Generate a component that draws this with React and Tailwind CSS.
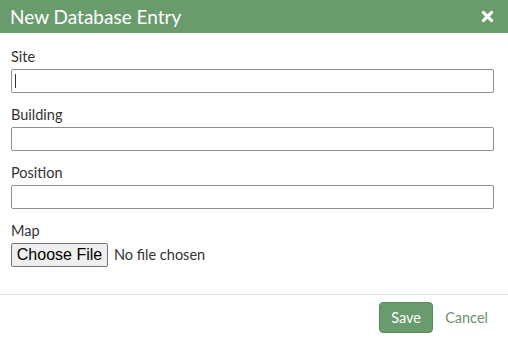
import { FaTimes } from 'react-icons/fa'

const fields = ['Site', 'Building', 'Position']

export default function App() {
  return (
    <div className="w-[508px] h-[340px] bg-white flex flex-col font-['Lato',sans-serif] text-[#333]">
      <div className="h-[33px] bg-[#699b6d] flex items-center justify-between pl-[10px] pr-[12px]">
        <h1 className="text-[19px] text-white leading-none">New Database Entry</h1>
        <FaTimes size={17} className="text-white" />
      </div>

      <div className="flex-1 px-[11px] pt-[14px]">
        {fields.map((f, i) => (
          <div key={f} className="mb-[12px]">
            <label className="block text-[14.5px] leading-5 mb-[2px]">{f}</label>
            <div className="relative">
              <input type="text" className="block w-[483px] h-[24px] border border-[#8f8f8f] rounded-[2px] outline-none px-1" />
              {i === 0 && <span className="absolute left-[4px] top-[5px] w-px h-[14px] bg-[#333]" />}
            </div>
          </div>
        ))}
        <label className="block text-[14.5px] leading-5 mb-[2px]">Map</label>
        <div className="flex items-center gap-[6px]">
          <button className="h-[24px] w-[97px] bg-[#efefef] border border-[#767676] rounded-[2px] text-[16px] text-black font-['Liberation_Sans',sans-serif] leading-none">
            Choose File
          </button>
          <span className="text-[14.5px]">No file chosen</span>
        </div>
      </div>

      <div className="border-t border-[#e5e5e5] h-[46px] flex items-center justify-end gap-[12px] pr-[20px]">
        <button className="h-[31px] w-[54px] bg-[#699b6d] border border-[#5b8a5f] rounded-[4px] text-white text-[14.5px]">Save</button>
        <span className="text-[14.5px] text-[#6e8f72]">Cancel</span>
      </div>
    </div>
  )
}
